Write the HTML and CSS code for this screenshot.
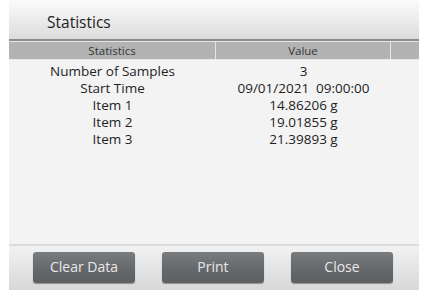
FILE: index.html
```html
<!DOCTYPE html>
<html>
<head>
<meta charset="utf-8">
<link rel="stylesheet" href="styles.css">
</head>
<body>
<div class="screen">
  <div class="title">Statistics</div>
  <div class="head">
    <div class="hc c1">Statistics</div>
    <div class="hc c2">Value</div>
    <div class="hc c3"></div>
  </div>
  <div class="body">
    <div class="row"><div class="c1">Number of Samples</div><div class="c2">3</div></div>
    <div class="row"><div class="c1">Start Time</div><div class="c2">09/01/2021&nbsp; 09:00:00</div></div>
    <div class="row"><div class="c1">Item 1</div><div class="c2">14.86206 g</div></div>
    <div class="row"><div class="c1">Item 2</div><div class="c2">19.01855 g</div></div>
    <div class="row"><div class="c1">Item 3</div><div class="c2">21.39893 g</div></div>
  </div>
  <div class="bar">
    <div class="btn">Clear Data</div>
    <div class="btn">Print</div>
    <div class="btn">Close</div>
  </div>
</div>
</body>
</html>
```
FILE: styles.css
```css
html, body { margin: 0; padding: 0; background: #ffffff; }
body { width: 426px; height: 297px; overflow: hidden; font-family: "Open Sans", "Liberation Sans", sans-serif; color: #1e1e1e; }
.screen { margin-left: 9px; width: 410px; height: 290px; display: flex; flex-direction: column; }
.title { height: 39px; border-bottom: 2px solid #8c8c8c; background: linear-gradient(#fbfbfb, #dcdcdd); font-size: 15.5px; padding-left: 38px; line-height: 45px; box-sizing: content-box; }
.head { height: 17px; display: flex; background: #b3b3b3; border-top: 1px solid #e6e6e6; border-bottom: 1px solid #e8e8e8; font-size: 11.5px; color: #333; }
.hc { text-align: center; line-height: 17px; }
.head .c1 { width: 206px; border-right: 1px solid #e6e6e6; }
.head .c2 { width: 174px; border-right: 1px solid #e6e6e6; }
.head .c3 { flex: 1; }
.body { flex: 1; background: #f3f3f3; padding-top: 3px; border-bottom: 2px solid #dcdcdc; }
.row { display: flex; height: 17px; line-height: 17px; font-size: 13.5px; }
.row .c1 { width: 207px; text-align: center; }
.row .c2 { width: 175px; text-align: center; }
.bar { height: 44px; background: linear-gradient(#f2f2f2, #e2e2e3 60%, #d8d8d9); display: flex; gap: 27px; padding-left: 24px; padding-top: 6px; box-sizing: border-box; }
.btn { width: 102px; height: 31px; border-radius: 3px; background: linear-gradient(#7a7d80, #65686b 55%, #5d6063); box-shadow: 0 1px 1px rgba(0,0,0,0.35); color: #e8e8e8; font-size: 14px; text-align: center; line-height: 30px; }
```
